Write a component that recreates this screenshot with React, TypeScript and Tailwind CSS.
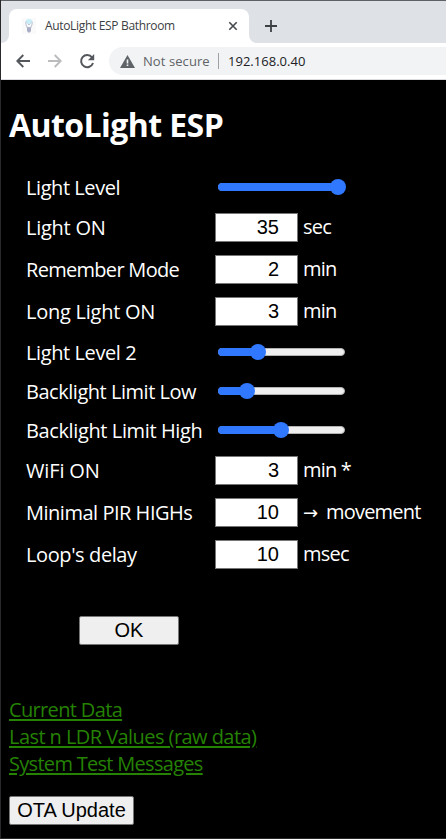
import React from "react";

type Row =
  | { kind: "range"; label: string; track: string; fill: string }
  | { kind: "number"; label: string; track: string; value: string; unit: string; arrow?: boolean };

const rows: Row[] = [
  { kind: "range", label: "Light Level", track: "tracking-[-0.43px]", fill: "w-[120px]" },
  { kind: "number", label: "Light ON", track: "tracking-[-0.25px]", value: "35", unit: "sec" },
  { kind: "number", label: "Remember Mode", track: "tracking-[-0.7px]", value: "2", unit: "min" },
  { kind: "number", label: "Long Light ON", track: "tracking-[-0.25px]", value: "3", unit: "min" },
  { kind: "range", label: "Light Level 2", track: "tracking-[-0.4px]", fill: "w-[40px]" },
  { kind: "range", label: "Backlight Limit Low", track: "tracking-[-0.47px]", fill: "w-[29px]" },
  { kind: "range", label: "Backlight Limit High", track: "tracking-[-0.38px]", fill: "w-[63px]" },
  { kind: "number", label: "WiFi ON", track: "tracking-[-0.15px]", value: "3", unit: "min *" },
  { kind: "number", label: "Minimal PIR HIGHs", track: "tracking-[-0.48px]", value: "10", unit: "movement", arrow: true },
  { kind: "number", label: "Loop's delay", track: "tracking-[-0.4px]", value: "10", unit: "msec" },
];

function Slider({ fill }: { fill: string }) {
  return (
    <div className="ml-[3px] mt-[15px] h-2 w-[127px] rounded-full border border-[#b2b2b2] bg-[#efefef]">
      <div className={`relative -ml-px -mt-px h-2 rounded-l-full bg-[#2f78ff] ${fill}`}>
        <div className="absolute -right-2 -top-1 h-4 w-4 rounded-full bg-[#2f78ff]" />
      </div>
    </div>
  );
}

function SettingRow({ row }: { row: Row }) {
  const isRange = row.kind === "range";
  return (
    <div className={`flex items-start ${isRange ? "h-[39px]" : "h-[42px]"}`}>
      <div className={`w-[189px] shrink-0 ${isRange ? "pt-[6px]" : "pt-[7px]"} ${row.track}`}>{row.label}</div>
      {row.kind === "range" ? (
        <Slider fill={row.fill} />
      ) : (
        <>
          <div className="mt-[6px] flex h-[29px] w-[83px] shrink-0 items-center justify-end border border-[#767676] bg-white pr-[18px] font-['Liberation_Sans',sans-serif] text-[20px] leading-[27px] text-black">
            {row.value}
          </div>
          <div className="flex pl-[5px] pt-[6px] tracking-[-0.8px]">
            {row.arrow && (
              <span className="w-[23px] pt-px font-['DejaVu_Sans',sans-serif] text-[18px] tracking-normal">→</span>
            )}
            {row.unit}
          </div>
        </>
      )}
    </div>
  );
}

function TabStrip() {
  return (
    <div className="flex h-[43px] items-end border-t border-[#5f6064] bg-[#dee1e6]">
      <div className="flex h-[34px] w-[8px] shrink-0 flex-col justify-end bg-white">
        <div className="h-full rounded-br-lg bg-[#dee1e6]" />
      </div>
      <div className="flex h-[34px] w-[240px] shrink-0 items-center rounded-t-lg bg-white pl-[13px]">
        <svg width="14" height="16" viewBox="0 0 14 16" className="shrink-0">
          <rect width="14" height="16" fill="#fafafb" />
          <ellipse cx="7" cy="3.5" rx="3.3" ry="2.5" fill="#c9eef8" />
          <path d="M4.2 3.5c-1.8 2.5.6 3.9.9 6h3.8c.3-2.1 2.7-3.5.9-6" fill="none" stroke="#c2c7d8" strokeWidth="1.2" />
          <path d="M5.5 5.5 7 7l1.500-1.500" fill="none" stroke="#c2c7d8" />
          <path d="M5 9.500h4v3.500l-1.200 1.500H6.200L5 13Z" fill="#a9aec4" />
        </svg>
        <span className="ml-[9px] w-[180px] whitespace-nowrap text-[12px] leading-4 tracking-[-0.33px] text-[#3c4043]">
          AutoLight ESP Bathroom
        </span>
        <svg width="10" height="10" viewBox="0 0 10 10" className="ml-[3px] shrink-0">
          <path d="m1.300 1.300 7.400 7.400m0-7.400-7.400 7.400" stroke="#45484c" strokeWidth="1.600" />
        </svg>
      </div>
      <div className="h-[34px] grow bg-white">
        <div className="flex h-[34px] items-center rounded-bl-lg bg-[#dee1e6] pl-[16px]">
          <svg width="12" height="12" viewBox="0 0 12 12">
            <path d="M6 0v12M0 6h12" stroke="#3c4043" strokeWidth="1.800" />
          </svg>
        </div>
      </div>
    </div>
  );
}

function Toolbar() {
  return (
    <div className="flex h-[37px] items-center border-b border-[#dadce0] bg-white pl-[15px]">
      <svg width="14" height="14" viewBox="0 0 14 14" fill="none" stroke="#54575b" strokeWidth="1.900" className="shrink-0">
        <path d="M14 7H1.500M7.300 1 1.300 7l6 6" />
      </svg>
      <svg width="14" height="14" viewBox="0 0 14 14" fill="none" stroke="#babcbe" strokeWidth="1.900" className="ml-[18px] shrink-0">
        <path d="M0 7h12.500M6.700 1l6 6-6 6" />
      </svg>
      <svg width="16" height="16" viewBox="0 0 16 16" className="ml-[17px] shrink-0">
        <path d="M13 4.300A6.100 6.100 0 1 0 14 10" fill="none" stroke="#54575b" strokeWidth="2" />
        <path d="M15.200 1v6.300H8.900Z" fill="#54575b" />
      </svg>
      <div className="ml-[14px] flex h-7 grow items-center rounded-l-full bg-[#f1f3f4] pl-[11px]">
        <svg width="15" height="13" viewBox="0 0 15 13" className="shrink-0">
          <path d="M7.500 0 15 13H0Z" fill="#5f6368" />
          <path d="M6.700 4.500h1.600v4H6.700Zm0 5h1.600v1.600H6.700Z" fill="#f1f3f4" />
        </svg>
        <span className="ml-[8px] w-[75px] whitespace-nowrap text-[13px] leading-5 tracking-[0.08px] text-[#5f6368]">Not secure</span>
        <div className="h-4 w-px shrink-0 bg-[#9da0a5]" />
        <span className="ml-[9px] text-[13px] leading-5 tracking-[0.02px] text-[#202124]">192.168.0.40</span>
      </div>
    </div>
  );
}

export default function App() {
  return (
    <div className="h-[839px] w-[446px] overflow-hidden border-l border-[#29292b] bg-black font-['Open_Sans','Noto_Sans',sans-serif]">
      <TabStrip />
      <Toolbar />
      <main className="h-[759px] border-b border-[#29292b] bg-black pl-2 text-[20px] leading-[27px] text-white">
        <h1 className="pt-[23px] text-[32px] font-bold leading-[43px] tracking-[-0.57px]">AutoLight ESP</h1>
        <div className="ml-[17px] mt-[22px] whitespace-nowrap">
          {rows.map((row) => (
            <SettingRow key={row.label} row={row} />
          ))}
        </div>
        <button className="ml-[70px] mt-[40px] block h-[29px] w-[100px] rounded-[2px] border border-[#767676] bg-[#efefef] font-['Liberation_Sans',sans-serif] text-[20px] leading-[27px] text-black">
          OK
        </button>
        <nav className="mt-[51px] flex flex-col items-start text-[#258203]">
          <a className="tracking-[-0.65px] underline decoration-2 underline-offset-[2px]">Current Data</a>
          <a className="tracking-[-0.56px] underline decoration-2 underline-offset-[2px]">Last n LDR Values (raw data)</a>
          <a className="tracking-[-0.7px] underline decoration-2 underline-offset-[2px]">System Test Messages</a>
        </nav>
        <button className="mt-[19px] block h-[29px] w-[125px] whitespace-nowrap rounded-[2px] border border-[#767676] bg-[#efefef] font-['Liberation_Sans',sans-serif] text-[20px] leading-[27px] text-black">
          OTA Update
        </button>
      </main>
    </div>
  );
}
